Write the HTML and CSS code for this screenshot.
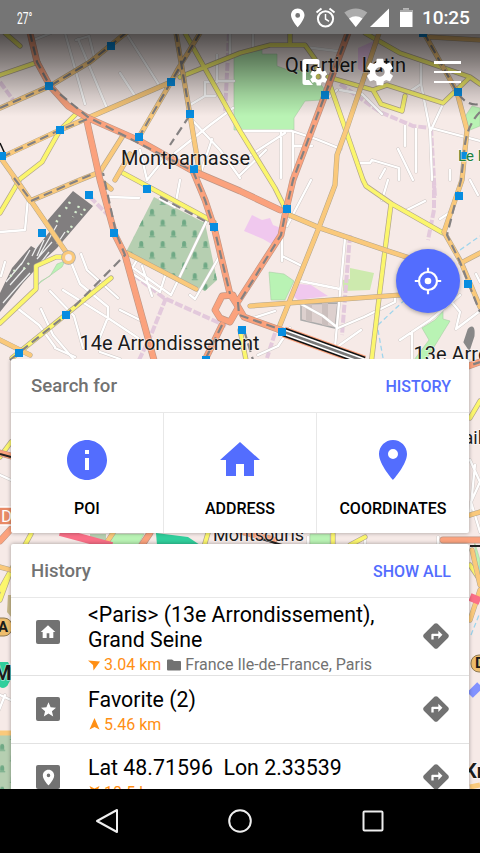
FILE: index.html
```html
<!DOCTYPE html>
<html lang="en">
<head>
<meta charset="utf-8">
<title>Map search</title>
<link rel="stylesheet" href="styles.css">
</head>
<body>
<div class="screen">
<svg class="map" viewBox="0 0 480 790" width="480" height="790">
  <defs>
    <pattern id="graves" width="21.4" height="21.4" patternUnits="userSpaceOnUse" x="146" y="205">
      <path d="M4 9.500V6q0-2 2-2t2 2v3.500zM3 10h6v1H3zM14.700 20.200v-3.500q0-2 2-2t2 2v3.500zM13.700 20.700h6v.7h-6z" fill="#6fa985"/>
    </pattern>
    <linearGradient id="shade" x1="0" y1="0" x2="0" y2="1">
      <stop offset="0" stop-color="#000" stop-opacity=".68"/>
      <stop offset=".35" stop-color="#000" stop-opacity=".45"/>
      <stop offset=".75" stop-color="#000" stop-opacity=".15"/>
      <stop offset="1" stop-color="#000" stop-opacity="0"/>
    </linearGradient>
    <g id="minor">
      <path d="M65 33l20 71M78 39l28 67M128 36l31 49M120 73l15 23M76 40l13-4 5 20M36 39l15-6"/>
      <path d="M217 55v26h17M190 105l15-9v-14h12M205 96h10M192 120l28 30 20 28M175 153l35-28 23-17M200 175l12-36M230 33v22M253 33v14M305 47l32 4M140 150l7 30M147 180l17-21M0 232l25-2 3-32M5 262l-4 14M110 197l29 1M160 199l15 8 5-27M125 262l46 33 35-73M190 295l5 4 4-7 20-35M138 258l-8 14 30 20 5-16M152 296l-10-30M81 254l6 16 31 28M71 262l9 22 28 23v10l-8 20M41 309l12 26 22 26M50 291l24 25 9 32M63 290l45 28 30 20M17 308l22 17 16 22M120 310l20 10"/>
      <path d="M240 131l52 0 24 8 25 10M281 132v46M293 132v48M293 146h19M240 162l45-29M240 175l26-25M328 98l9-8M340 90l22 4 20 20M421 64v20l9 46 2 50M443 104l-12 26M431 128l49 13M405 126v20M416 129v43M398 149l15 31M360 163h10l2-3 27 8v12M380 178l5-9M450 170v10M421 84l-12 8M311 180l-24 46M282 226v35M282 256l18 9M345 239l-10 108M300 281l40 8M301 304l22 12 15 12 26-11 31-15v-5M337 347l24-17M400 340l30-20 30-25M412 332v28M290 328l-12 18-20 9M388 180l-6 20M405 211l20-10M440 219l12-8M470 180l8 15M476 274l4 8M250 319l25-8M450 300l10 12-4 17 24-18"/>
      <path d="M0 475l11 5M0 695l11 5M5 695l-6 15M470 460l10 22-9 20 9 30M475 465l-5 50M55 348l20 9M100 352l20 7M365 537v20M438 537v20M308 537v12"/>
    </g>
    <g id="yellow">
      <path d="M5 33l15 13M0 75l38-13M78 112L60 130l-18 32-22 17-20 34M185 33l55 98 35 57 10 20M240 53l-60 24M240 53l30-8h35l10 14 3 18M290 33v12M123 173l91 49M328 77l45 13 14-5 56 18 27-26 10 7M373 90l8 14 21 7 3-15M365 33l35 20 70 24M330 85l15 43 18 52 3 6 26 18 51 29M391 204l-6 46-5 40-9 75M0 323l36-34v-23l20-9h12M12 358l99-80M240 330l6 30M0 457l11-15M470 418l10-17M470 565l10 15M11 570L0 600M31 534L0 590M165 540l38 10 5-17M333 534v10M350 545l15-8"/>
    </g>
    <g id="orange">
      <path d="M0 108l50-22 40-24 37-30M2 157l58-27 30-13 81-35M171 82l-32 55M176 33l14 82 10 60M200 33l-22 36-7 13M0 157l20 28 11 16 37 54M14 178l16 23 50-21 20-8 24-38M115 180l15-26M379 33l-31 92-11 30-2 30-17 45-40 100M424 33l33 59 10 38-5 50-18 52 17 30 19 45M430 37l50 3M287 214l33 14 65 22 40 13M461 263l19-10M250 306l40-3 110-8M127 253l69 36M0 340l30 15M100 180l11 9M470 515l10-3M470 620l10-30M472 550l8 35M0 567l11 3M105 545l8-12"/>
    </g>
    <g id="red">
      <path d="M30 33l7 29 13 24 18 20 20 12 50 22 55 31 47 20 40 19M348 33l-23 62-32 85-7 30-5 25-44 68M86 117l14 63 15 55 10 20 29 105M193 171l12 29 9 27 16 67 7 11M237 304l-4-9-11 1-7 14 5 8 10 4 8-14zM222 325l-17 35M237 305l7 12 39 14M460 369l20-7M0 453l11 3M0 541l11-12M443 540h37M240 531l34 9M142 545l8-12"/>
    </g>
    <g id="transit">
      <path d="M30 33l7 29 13 24 38 31 105 54 12 29 9 27 16 67M0 108l50-22 40-24 37-30M2 157l58-27 30-12M171 82l-32 55M200 33l-29 49M176 33l14 82-20 30M348 33l-23 62-32 85-7 30-5 25-41 66M424 33l33 59q10 15 23 12M480 112q-15 15-16 43l-3 25-14 55 13 27 20 50M31 201l50-22 14-6M160 197l54 29M10 360l56-45 59-60-9-22-13-60M14 178l16 21M238 302l1 13 43 15M222 325l-17 35M244 330l9 30M460 369l20-7"/>
    </g>
  </defs>
  <rect width="480" height="790" fill="#f6eae7"/>
  <path class="park" d="M234 55l28-5v4h15v12l11 4h22l15 20-4 10-16 1-11 17v12h-60z"/>
  <path class="park" d="M466 115l6-9 8 2v18l-10 4-5-7zM269 272l15 2 10 7-9 19h-14zM11 313l30-31 21-15 3-6-8 3-7 12-9 5-26 28-15 13zM435 320l8-9v8l7 2-24 39h-12l15-20-7-12zM110 534h34l-6 11h-28zM310 534h20v11h-20zM474 540l6 20v30z"/>
  <path d="M350 268l24 5-4 17-27 1v-11l7-1z" fill="#cdeaae"/>
  <path class="shop" d="M244 231l8-16 10 5 8-2 3 7 8 3-6 18-12-7zM299 284l12 1 17 11-30 4-5-4zM358 48l18-8-10 34-8-5z"/>
  <path d="M301 304l37-1-3 25-34-8z" fill="#ddd0ce" stroke="#aaa" stroke-width="1.500"/>
  <path d="M306 303h6v19l-6-1zM322 303h6v23l-6-1z" fill="#cbbfbd"/>
  <g class="cemetery">
    <path d="M154 197l51 26 12 57-12 11-79-39z"/>
    <path d="M0 735h11v55H0zM90 534h16v11H90z"/>
  </g>
  <path d="M154 197l51 26 12 57-12 11-79-39zM0 735h11v55H0z" fill="url(#graves)"/>
  <path d="M73 191l20 15-36 42-12 11-22 24-23 29v-19l12-25 19-22 5 3 14-18-3-10z" fill="#817e7f"/>
  <path d="M6 282l16-19M10 285l15-17M18 286l12-13M3 303l15-17M30 250l-9 15M52 242l-15 17M49 252l-10 13M57 225l-18 31M65 232l-8 12M38 244l-6 12M44 240l-7 16" fill="none" stroke="#eee" stroke-width="1.300"/>
  <path d="M70 202l-5 8M79 206l-6 11M85 209l-4 6M60 215l-4 8M72 226l-5 7M15 270l-5 7M29 263l-8 9" fill="none" stroke="#d8efd1" stroke-width="2.500" stroke-dasharray="2 4"/>
  <path class="walk" d="M229 33l-4 80M0 82l16 22M90 197l20 20M134 275l30 23 62 28M166 298l-15 37-12 25M340 84l40 28 33 14 17 2M434 180v30l-6 30M350 235l-8 100M275 333l-8 25M431 128l4 70"/>
  <path d="M460 250l20-14M378 325l32-30M378 330l5 28M470 550l10 20M471 635l8-20" fill="none" stroke="#9ed5ed" stroke-width="1.300" stroke-dasharray="5 3"/>
  <use href="#minor" class="road minor-edge"/><use href="#minor" class="road minor-fill"/>
  <use href="#yellow" class="road major-edge"/><use href="#yellow" class="road yellow-fill"/>
  <use href="#orange" class="road major-edge"/><use href="#orange" class="road orange-fill"/>
  <use href="#red" class="road red-edge"/><use href="#red" class="road red-fill"/>
  <use href="#transit" class="transit"/>
  <circle cx="68.500" cy="257.500" r="5" fill="#f6eae7" stroke="#aaa" stroke-width="4.600"/>
  <circle cx="68.500" cy="257.500" r="5" fill="#f6eae7" stroke="#fac97b" stroke-width="3.200"/>
  <path d="M284 332l80 29" fill="none" stroke="#fba27d" stroke-width="11"/>
  <path d="M284 332l80 29" fill="none" stroke="#111" stroke-width="9"/>
  <path d="M284 332l80 29" fill="none" stroke="#fff" stroke-width="6"/>
  <path d="M284 332l80 29" fill="none" stroke="#777" stroke-width="2.400"/>
  <path d="M0 454l11 3M262 539l20 6M470 546h10" fill="none" stroke="#222" stroke-width="2"/>
  <path d="M469 330q5-6 4 6l-4 12-4-6z" fill="#888" stroke="#888" stroke-width="3"/>
  <path d="M0 143l5 11" stroke="#111" stroke-width="1.500"/>
  <path d="M60 532l52 14M470 597l10 4" stroke="#fa6f87" stroke-width="8"/>
  <path d="M156 533l32 4 12 8h-43z" fill="#31cf9c"/>
  <path d="M470 695l10-10" stroke="#8292ff" stroke-width="8"/>
  <path d="M8 595h4v23l-5-6z" fill="#c9b98c"/>
  <path d="M-8 662h16l6 12-7 12H-8z" fill="#31cf9c"/>
  <circle cx="3" cy="683" r="5" fill="#31cf9c"/>
  <rect x="-5" y="507" width="24" height="18" rx="6" fill="#e88a66" stroke="#fff" stroke-width="1.500"/>
  <rect x="-12" y="618" width="24" height="18" rx="8" fill="#eebd6c" stroke="#8f7b55"/>
  <rect x="471" y="655" width="24" height="17" rx="8" fill="#eebd6c" stroke="#8f7b55"/>
  <path d="M0 733h11M470 787l10-2" stroke="#fac97b" stroke-width="5"/>
  <g fill="#078de0">
    <path d="M107 42h8v8h-8zM45 82h8v8h-8zM167 78h8v8h-8zM56 126h8v8h-8zM186 110h8v8h-8zM135 133h8v8h-8zM-2 152h8v8h-8zM190 165h8v8h-8zM85 191h8v8h-8zM143 185h8v8h-8zM38 229h8v8h-8zM110 229h8v8h-8zM210 223h8v8h-8zM62 311h8v8h-8zM15 349h8v8h-8zM321 91h8v8h-8zM454 88h8v8h-8zM460 152h7v7h-7zM283 205h8v8h-8zM455 192h8v8h-8zM464 280h8v8h-8zM278 328h8v8h-8zM238 326h8v8h-8zM202 356h8v8h-8zM419 33h8v4h-8z"/>
  </g>
  <g class="label">
    <text x="121" y="165" textLength="129">Montparnasse</text>
    <text x="285" y="72" textLength="121">Quartier Latin</text>
    <text x="79.500" y="349.500" textLength="180">14e Arrondissement</text>
    <text x="413.500" y="360.500">13e Arro</text>
    <text x="213" y="541" class="small">Montsouris</text>
    <text x="463.500" y="443.500" class="small">ail</text>
    <text x="458" y="161" class="place">Le M</text>
    <text x="464" y="778" class="bold">Kr</text>
    <text x="-6" y="680" class="bold">M</text>
    <text x="-2" y="632" class="ref">A</text>
    <text x="475" y="668" class="ref">D</text>
    <text x="1" y="522" class="shield">D</text>
  </g>
  <rect y="33" width="480" height="83" fill="url(#shade)"/>
</svg>

<header class="status">
  <span class="temp">27°</span>
  <svg width="130" height="33" viewBox="0 0 130 33" fill="#fff">
    <path fill-rule="evenodd" d="M12.700 7.500c-4 0-6.700 3-6.700 6.800 0 4.700 6.700 12 6.700 12s6.800-7.300 6.800-12c0-3.800-2.800-6.800-6.800-6.800zm0 4.500a2.400 2.400 0 110 4.800 2.400 2.400 0 010-4.800z"/>
    <g fill="none" stroke="#fff"><circle cx="40.500" cy="17.800" r="7.600" stroke-width="2"/><path d="M40.500 13v5l3.500 2.300" stroke-width="1.500"/><path d="M31.500 11.500l5-4M49.500 11.500l-5-4" stroke-width="2"/></g>
    <path d="M59.300 11.500q11.500-8 23 0L70.800 26z" opacity=".4"/><path d="M64 17.500q6.800-4.500 13.500 0L70.800 26z"/>
    <path d="M85 26l19-18.500V26z"/>
    <path d="M115 9h3V7.200h6V9h3.500v17H115z"/><path d="M115 9h3V7.200h6V9h3.500v2H115z" fill="#aaa"/>
  </svg>
  <time>10:25</time>
</header>

<nav class="toolbar">
  <svg width="28" height="28" viewBox="0 0 28 28" fill="#fff">
    <path d="M4 1h12q2.500 0 2.500 2.500V9h-2V6H5v16h3l4 5H4q-2.500 0-2.500-2.500v-21Q1.500 1 4 1z"/>
    <g transform="translate(7.300 8.300) scale(.87)"><use href="#gear"/></g>
  </svg>
  <svg class="settings" width="32" height="32" viewBox="0 0 24 24" fill="#fff">
    <path id="gear" d="M19.430 12.980c.04-.32.07-.64.07-.98s-.03-.66-.07-.98l2.110-1.650c.19-.15.24-.42.120-.64l-2-3.460c-.12-.22-.39-.3-.61-.22l-2.490 1c-.52-.4-1.080-.73-1.690-.98l-.38-2.650C14.460 2.180 14.250 2 14 2h-4c-.25 0-.46.18-.49.42l-.38 2.650c-.61.25-1.170.59-1.690.98l-2.490-1c-.23-.09-.49 0-.61.22l-2 3.460c-.13.22-.07.49.12.64l2.110 1.650c-.04.32-.07.65-.07.98s.03.66.07.98l-2.110 1.650c-.19.15-.24.42-.12.64l2 3.460c.12.22.39.3.61.22l2.490-1c.52.4 1.080.73 1.690.98l.38 2.650c.03.24.24.42.49.42h4c.25 0 .46-.18.49-.42l.38-2.650c.61-.25 1.170-.59 1.690-.98l2.490 1c.23.09.49 0 .61-.22l2-3.460c.12-.22.07-.49-.12-.64l-2.110-1.650zM12 15.500c-1.930 0-3.500-1.570-3.500-3.500s1.570-3.500 3.500-3.500 3.500 1.570 3.500 3.500-1.570 3.500-3.500 3.500z"/>
  </svg>
  <div class="menu"><i></i><i></i><i></i></div>
</nav>

<button class="locate" aria-label="My location">
  <svg width="28" height="28" viewBox="0 0 28 28" fill="none" stroke="#fff" stroke-width="2.200"><circle cx="14" cy="14" r="9"/><circle cx="14" cy="14" r="3.300" fill="#fff" stroke="none"/><path d="M14 .8v4.500M14 22.700v4.500M.8 14h4.500M22.700 14h4.500"/></svg>
</button>

<main class="cards">
  <section class="card">
    <div class="head"><h2>Search for</h2><a>HISTORY</a></div>
    <div class="tabs">
      <div class="tab"><svg width="48" height="48" viewBox="0 0 24 24"><path d="M12 2C6.480 2 2 6.480 2 12s4.480 10 10 10 10-4.480 10-10S17.520 2 12 2zm1 15h-2v-6h2v6zm0-8h-2V7h2v2z"/></svg><span>POI</span></div>
      <div class="tab"><svg width="48" height="48" viewBox="0 0 24 24"><path d="M10 20v-6h4v6h5v-8h3L12 3 2 12h3v8z"/></svg><span>ADDRESS</span></div>
      <div class="tab"><svg width="48" height="48" viewBox="0 0 24 24"><path d="M12 2C8.130 2 5 5.130 5 9c0 5.250 7 13 7 13s7-7.750 7-13c0-3.870-3.130-7-7-7zm0 9.500a2.500 2.500 0 010-5 2.500 2.500 0 010 5z"/></svg><span>COORDINATES</span></div>
    </div>
  </section>
  <section class="card history">
    <div class="head"><h2>History</h2><a>SHOW ALL</a></div>
    <div class="row tall">
      <div class="badge"><svg width="16" height="16" viewBox="0 0 24 24"><path d="M10 21v-7h4v7h6v-9h3L12 2 1 12h3v9z"/></svg></div>
      <div class="body"><div class="title">&lt;Paris&gt; (13e Arrondissement), Grand Seine</div>
        <div class="meta"><svg width="16" height="16" viewBox="0 0 16 16" fill="#ff8f14"><path d="M0 3.500L12 4.500 5.500 13.500 5 8z"/></svg><span class="km">3.04 km</span><svg class="folder" width="14" height="12" viewBox="0 0 14 12" fill="#727272"><path d="M0 1.500Q0 .5 1 .5h4L7 2h6q1 0 1 1v7.500q0 1-1 1H1q-1 0-1-1z"/></svg><span>France Ile-de-France, Paris</span></div></div>
      <svg class="go" width="28" height="28" viewBox="0 0 24 24"><path id="turn" d="M22.430 10.590l-9.010-9.010c-.75-.75-2.070-.76-2.830 0l-9 9c-.78.78-.78 2.040 0 2.820l9 9c.39.390.9.580 1.410.580.510 0 1.020-.19 1.410-.58l8.990-8.990c.79-.76.8-2.020.03-2.820zM14 14.500V12h-4v3H8v-4c0-.55.450-1 1-1h5V7.500l3.500 3.500-3.500 3.500z"/></svg>
    </div>
    <div class="row short">
      <div class="badge"><svg width="15" height="15" viewBox="0 0 24 24"><path d="M12 18.500l7.500 4.700-2-8.600L24 9l-8.600-.7L12 .5 8.600 8.300 0 9l6.500 5.600-2 8.600z"/></svg></div>
      <div class="body"><div class="title">Favorite (2)</div>
        <div class="meta"><svg width="16" height="16" viewBox="0 0 16 16" fill="#ff8f14"><path d="M6.500 1l5 11.500-5-2.500-5 2.500z"/></svg><span class="km">5.46 km</span></div></div>
      <svg class="go" width="28" height="28" viewBox="0 0 24 24"><use href="#turn"/></svg>
    </div>
    <div class="row short">
      <div class="badge"><svg width="17" height="17" viewBox="0 0 24 24"><path d="M12 1C7.500 1 4 4.500 4 9c0 6 8 14 8 14s8-8 8-14c0-4.500-3.500-8-8-8zm0 10.500a2.500 2.500 0 010-5 2.500 2.500 0 010 5z"/></svg></div>
      <div class="body"><div class="title">Lat 48.71596&nbsp; Lon 2.33539</div>
        <div class="meta"><svg width="16" height="16" viewBox="0 0 16 16" fill="#ff8f14"><path d="M1.500 1l5 2.500 5-2.500-5 11.500z"/></svg><span class="km">18.5 km</span></div></div>
      <svg class="go" width="28" height="28" viewBox="0 0 24 24"><use href="#turn"/></svg>
    </div>
  </section>
</main>

<footer class="navbar">
  <svg width="24" height="28" viewBox="0 0 24 28"><path d="M2 14L22 3v22z"/></svg>
  <svg width="28" height="28" viewBox="0 0 28 28"><circle cx="14" cy="14" r="10.800"/></svg>
  <svg width="24" height="28" viewBox="0 0 24 28"><rect x="2.500" y="4.500" width="19" height="19" rx="1"/></svg>
</footer>
</div>
</body>
</html>
```
FILE: styles.css
```css
* { box-sizing: border-box; }
body { margin: 0; font-family: Roboto, "Liberation Sans", sans-serif; }
svg { display: block; flex: none; }
.screen { position: relative; width: 480px; height: 853px; overflow: hidden; display: flex; flex-direction: column; }
.map { position: absolute; left: 0; top: 0; z-index: -1; }

.park { fill: #b9f3b4; stroke: #a8cfa4; stroke-width: .6; }
.shop { fill: #f0c8ee; }
.cemetery { fill: #b6cfb1; }
.walk { fill: none; stroke: #e3c9dc; stroke-width: 4; stroke-dasharray: 8 2; }
.road { fill: none; stroke-linejoin: round; stroke-linecap: round; }
.minor-edge { stroke: #cfc8c6; stroke-width: 3.2; }
.minor-fill { stroke: #fff; stroke-width: 2.3; }
.major-edge { stroke: #b2a58e; stroke-width: 5.2; }
.yellow-fill { stroke: #fbf66d; stroke-width: 3.8; }
.orange-fill { stroke: #fac97b; stroke-width: 4.200; }
.red-edge { stroke: #bd9686; stroke-width: 6.8; }
.red-fill { stroke: #fba27d; stroke-width: 5.6; }
.transit { fill: none; stroke: #858282; stroke-width: 2.2; stroke-dasharray: 9 5; }

.label { font-size: 20px; fill: #1b1b1b; stroke: #fff; stroke-opacity: .55; stroke-width: 1.500px; paint-order: stroke; }
.label .small { font-size: 18px; }
.label .place { font-size: 15px; fill: #20803a; }
.label .bold { font-size: 20px; font-weight: 700; }
.label .ref { font-size: 15px; font-weight: 700; stroke: none; }
.label .shield { font-size: 17px; fill: #fff; stroke: none; }

.status { height: 34px; margin-bottom: -1px; flex: none; background: #757575; color: #fff; display: flex; align-items: center; padding: 0 10px 0 17px; }
.temp { font-size: 16px; display: inline-block; transform: scaleX(.64); transform-origin: left; margin-right: auto; padding-top: 2px; }
.status time { font-size: 19px; font-weight: 500; width: 48px; margin-left: 7px; padding-top: 1px; letter-spacing: -.1px; }

.toolbar { height: 78px; flex: none; display: flex; align-items: center; justify-content: flex-end; padding-right: 19px; }
.settings { margin-left: 35px; margin-right: 38px; }
.menu { width: 27px; height: 22px; display: flex; flex-direction: column; justify-content: space-between; }
.menu i { height: 2.500px; background: #fff; }

.locate { align-self: flex-end; flex: none; width: 64px; height: 64px; margin: 138px 20px 46px 0; padding: 0; border: 0; border-radius: 50%; background: #536dfe; display: grid; place-items: center; box-shadow: 0 1px 4px rgba(0,0,0,.35); }

.cards { flex: 1; min-height: 0; overflow: hidden; padding: 0 11px; display: flex; flex-direction: column; gap: 11px; }
.card { flex: none; background: #fff; border-radius: 2px; box-shadow: 0 0 4px rgba(0,0,0,.35); overflow: hidden; }
.history { height: 260px; }
.head { height: 54px; border-bottom: 1px solid #e8e8e8; padding: 0 18px 0 20px; display: flex; align-items: center; justify-content: space-between; }
.head h2 { margin: 0; font-size: 18.600px; font-weight: 500; color: #727272; }
.head a { font-size: 16px; font-weight: 500; color: #536dfe; padding-top: 1px; }
.tabs { height: 120px; display: grid; grid-template-columns: 152px 153px 1fr; }
.tab { display: flex; flex-direction: column; align-items: center; padding-top: 23px; border-left: 1px solid #e8e8e8; font-size: 16px; font-weight: 500; color: #000; }
.tab:first-child { border-left: 0; }
.tab svg { fill: #536dfe; margin-bottom: 15px; }
.row { display: flex; align-items: center; padding: 0 19px 0 25px; border-bottom: 1px solid #e2e2e2; }
.tall { height: 78px; }
.short { height: 68px; }
.badge { width: 24px; height: 24px; border-radius: 2px; background: #727272; display: grid; place-items: center; margin-right: 28px; margin-bottom: 9px; }
.short .badge { margin-bottom: 1px; }
.badge svg { fill: #fff; }
.body { flex: 1; min-width: 0; padding-top: 3px; }
.title { font-size: 21.330px; line-height: 25px; color: #000; }
.short .title { margin-bottom: 3px; }
.meta { display: flex; align-items: center; height: 20px; line-height: 20px; font-size: 16px; color: #727272; margin-top: 3px; }
.short .meta { margin-top: 0; }
.km { color: #ff8f14; margin-right: 6px; }
.folder { margin-right: 4px; }
.go { fill: #727272; margin-bottom: 1px; }
.navbar { height: 64px; flex: none; background: #000; display: flex; align-items: center; justify-content: space-between; padding: 0 95px; }
.navbar svg { fill: none; stroke: #eee; stroke-width: 2; stroke-linejoin: round; }
```
